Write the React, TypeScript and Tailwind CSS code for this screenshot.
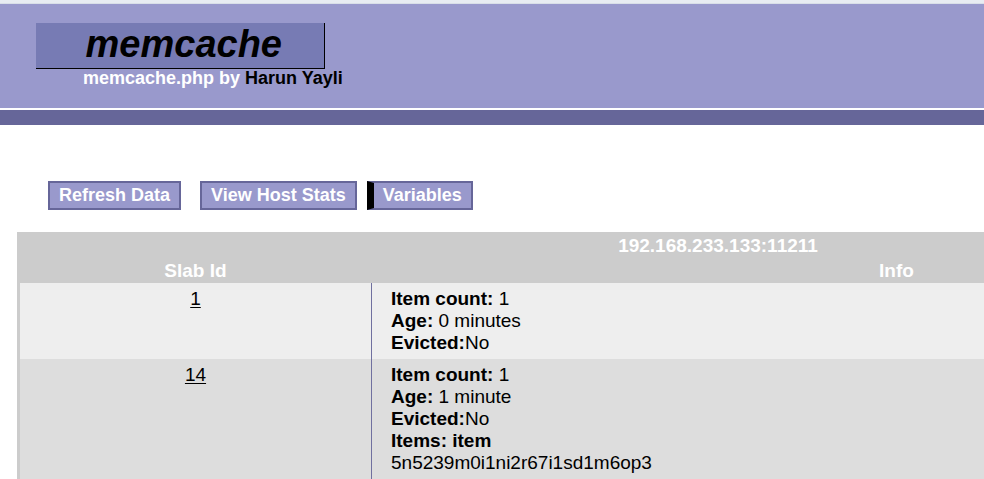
import React from 'react';

interface Slab {
  id: string;
  lines: { label: string; value: string }[];
  items?: string;
  tone: string;
}

const slabs: Slab[] = [
  {
    id: '1',
    tone: 'bg-[#eeeeee]',
    lines: [
      { label: 'Item count: ', value: '1' },
      { label: 'Age: ', value: '0 minutes' },
      { label: 'Evicted:', value: 'No' },
    ],
  },
  {
    id: '14',
    tone: 'bg-[#dddddd]',
    lines: [
      { label: 'Item count: ', value: '1' },
      { label: 'Age: ', value: '1 minute' },
      { label: 'Evicted:', value: 'No' },
    ],
    items: '5n5239m0i1ni2r67i1sd1m6op3',
  },
];

const MenuButton: React.FC<{ label: string; active?: boolean }> = ({ label, active = false }) => (
  <a
    href="#"
    className={
      active
        ? 'flex h-[29px] items-center border-2 border-l-[7px] border-[#666699] border-l-black bg-[#9999cc] px-[9px] text-[18px] font-bold leading-[21px] text-white'
        : 'flex h-[29px] items-center border-2 border-[#666699] bg-[#9999cc] px-[9px] text-[18px] font-bold leading-[21px] text-white'
    }
  >
    {label}
  </a>
);

const SlabRow: React.FC<{ slab: Slab }> = ({ slab }) => (
  <div className={`flex ${slab.tone}`}>
    <div className="w-[351px] shrink-0 py-[5px] text-center">
      <a href="#" className="text-black underline underline-offset-[2px]">
        {slab.id}
      </a>
    </div>
    <div className="flex-1 border-l border-[#70709f] py-[5px] pl-[19px]">
      {slab.lines.map((line) => (
        <div key={line.label}>
          <b>{line.label}</b>
          {line.value}
        </div>
      ))}
      {slab.items && (
        <>
          <div>
            <b>Items: item</b>
          </div>
          <div>{slab.items}</div>
        </>
      )}
    </div>
  </div>
);

const App: React.FC = () => {
  return (
    <div className="h-[479px] w-full overflow-hidden bg-white font-['Liberation_Sans',Arial,sans-serif] text-black">
      <div className="h-[3px] bg-[#e8ecf2]" />
      <div className="h-px bg-[#d9dfe8]" />

      <header className="h-[104px] bg-[#9999cc] pl-[36px] pt-[19px]">
        <div className="flex h-[46px] w-[289px] justify-end border-b border-r border-black bg-[#777bb4] pr-[42px]">
          <span className="text-[38px] font-bold italic leading-[43px]">memcache</span>
        </div>
        <div className="pl-[47px] text-[18px] font-bold leading-[18px] text-white">
          memcache.php by <span className="text-black">Harun Yayli</span>
        </div>
      </header>
      <div className="h-[2px] bg-white" />
      <div className="h-[15px] bg-[#666699]" />

      <nav className="mt-[56px] flex pl-[48px]">
        <MenuButton label="Refresh Data" />
        <div className="ml-[19px]">
          <MenuButton label="View Host Stats" />
        </div>
        <div className="ml-[10px]">
          <MenuButton label="Variables" active />
        </div>
      </nav>

      <div className="ml-[17px] mt-[22px] w-[1402px] bg-[#cccccc] text-[19px] leading-[22px]">
        <div className="pb-[1px] pt-[3px] text-center font-bold text-white">192.168.233.133:11211</div>
        <div className="flex pb-[1px] pt-[2px] font-bold text-white">
          <div className="w-[357px] shrink-0 text-center">Slab Id</div>
          <div className="flex-1 text-center">Info</div>
        </div>
        <div className="pl-[3px]">
          {slabs.map((slab) => (
            <SlabRow key={slab.id} slab={slab} />
          ))}
        </div>
      </div>
    </div>
  );
};

export default App;
